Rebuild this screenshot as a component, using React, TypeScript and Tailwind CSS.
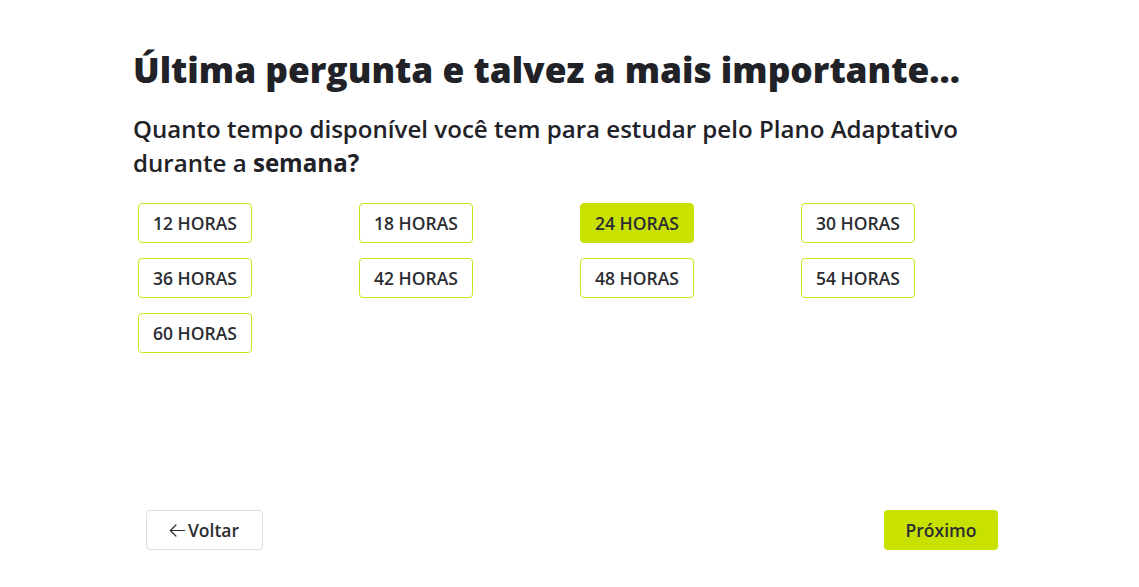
import React, { useState } from "react";

const options = [12, 18, 24, 30, 36, 42, 48, 54, 60];

export default function App() {
  const [selected, setSelected] = useState(24);

  return (
    <div
      className="w-[1139px] h-[587px] bg-white text-[#212227] flex flex-col"
      style={{ fontFamily: '"Open Sans", sans-serif' }}
    >
      <div className="pl-[133px] pt-[45px]">
        {/* Titulo */}
        <h1 className="text-[35.3px] leading-[48px] font-extrabold">
          Última pergunta e talvez a mais importante...
        </h1>
        <p className="mt-[19px] text-[24.1px] leading-[34px] font-semibold w-[860px]">
          Quanto tempo disponível você tem para estudar pelo Plano Adaptativo durante a{" "}
          <span className="font-bold">semana?</span>
        </p>

        {/* Opcoes */}
        <div className="mt-[23px] pl-[5px] grid grid-cols-[repeat(4,221px)] gap-y-[15px]">
          {options.map((h) => (
            <div key={h}>
              <button
                onClick={() => setSelected(h)}
                className={
                  "w-[114px] h-[40px] rounded-[4px] border text-[17.5px] font-semibold text-[#2b2d33] " +
                  (selected === h
                    ? "bg-[#c8e100] border-[#c8e100]"
                    : "bg-white border-[#cfe31a]")
                }
              >
                {h} HORAS
              </button>
            </div>
          ))}
        </div>
      </div>

      {/* Rodape */}
      <div className="mt-auto mb-[37px] pl-[146px] w-[998px] flex justify-between">
        <button className="w-[117px] h-[40px] rounded-[4px] border border-[#dedede] bg-white flex items-center justify-center gap-[1px] pr-[2px] text-[17.5px] font-semibold text-[#2b2d33]">
          <svg width="19" height="19" viewBox="0 0 24 24" fill="none" stroke="currentColor" strokeWidth="1.5" strokeLinecap="round" strokeLinejoin="round">
            <path d="M21 12H3" />
            <path d="M10 5l-7 7 7 7" />
          </svg>
          Voltar
        </button>
        <button className="w-[114px] h-[40px] rounded-[4px] bg-[#c8e100] text-[17.5px] font-semibold text-[#2b2d33]">
          Próximo
        </button>
      </div>
    </div>
  );
}
